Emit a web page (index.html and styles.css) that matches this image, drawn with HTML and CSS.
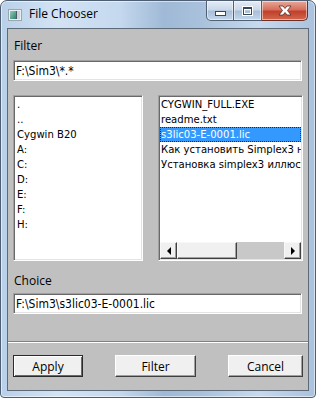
FILE: index.html
```html
<!DOCTYPE html>
<html lang="ru">
<head>
    <meta charset="UTF-8">
    <title>File Chooser</title>
    <link rel="stylesheet" href="styles.css">
</head>
<body>

<div class="window">
    <div class="titlebar">
        <svg class="app-icon" width="14" height="12" viewBox="0 0 14 12">
            <defs>
                <linearGradient id="teal" x1="0" y1="0" x2="1" y2="1">
                    <stop offset="0" stop-color="#8fd0b8"/>
                    <stop offset="1" stop-color="#2f7f72"/>
                </linearGradient>
            </defs>
            <rect x="0.5" y="0.5" width="13" height="11" fill="#e9eef2" stroke="#9aa6b0"/>
            <rect x="2" y="2" width="6" height="8" fill="url(#teal)"/>
            <rect x="8" y="2" width="1" height="8" fill="#4a5a66"/>
            <rect x="9" y="2" width="3" height="8" fill="#c9d6de"/>
        </svg>
        <span class="title">File Chooser</span>
        <div class="caption-buttons">
            <div class="cap-btn cap-min"><span class="min-glyph"></span></div>
            <div class="cap-btn cap-max"><span class="max-glyph"></span></div>
            <div class="cap-btn cap-close">
                <svg width="18" height="11" viewBox="0 0 18 11">
                    <path d="M3 1 L7 1 L9 3.5 L11 1 L15 1 L11.5 5.5 L15 10 L11 10 L9 7.5 L7 10 L3 10 L6.5 5.5 Z"
                          fill="#ffffff" stroke="#5b2a22" stroke-width="0.8" stroke-linejoin="round"/>
                </svg>
            </div>
        </div>
    </div>

    <div class="client">
        <div class="field-label">Filter</div>
        <input class="entry" type="text" value="F:\Sim3\*.*">

        <div class="lists">
            <div class="listbox dir-list">
                <div class="list-item">.</div>
                <div class="list-item">..</div>
                <div class="list-item">Cygwin B20</div>
                <div class="list-item">A:</div>
                <div class="list-item">C:</div>
                <div class="list-item">D:</div>
                <div class="list-item">E:</div>
                <div class="list-item">F:</div>
                <div class="list-item">H:</div>
            </div>
            <div class="listbox file-list">
                <div class="list-items">
                    <div class="list-item">CYGWIN_FULL.EXE</div>
                    <div class="list-item">readme.txt</div>
                    <div class="list-item selected">s3lic03-E-0001.lic</div>
                    <div class="list-item">Как установить Simplex3 на</div>
                    <div class="list-item">Установка simplex3 иллюстр</div>
                </div>
                <div class="hscroll">
                    <div class="scroll-btn"><span class="arrow-left"></span></div>
                    <div class="scroll-thumb"></div>
                    <div class="scroll-trough"></div>
                    <div class="scroll-btn"><span class="arrow-right"></span></div>
                </div>
            </div>
        </div>

        <div class="field-label choice-label">Choice</div>
        <input class="entry choice-entry" type="text" value="F:\Sim3\s3lic03-E-0001.lic">

        <div class="separator"></div>

        <div class="buttons">
            <button class="btn btn-default btn-apply">Apply</button>
            <button class="btn btn-filter">Filter</button>
            <button class="btn btn-cancel">Cancel</button>
        </div>
    </div>
</div>

</body>
</html>
```

FILE: styles.css
```css
body {
    margin: 0;
    padding: 0;
    background: #ffffff;
    font-family: "Open Sans", "Liberation Sans", sans-serif;
}
.window {
    width: 316px;
    height: 398px;
    box-sizing: border-box;
    border: 1px solid #4e5f73;
    border-radius: 7px 7px 4px 4px;
    padding: 0 6px 6px 6px;
    display: flex;
    flex-direction: column;
    background: linear-gradient(90deg, #b9d0e9 0%, #d3e3f4 18%, #c4d8ee 38%, #9fb9d6 52%, #a9c1dc 64%, #c6d9ee 82%, #aac2de 100%);
    box-shadow: inset 0 0 0 1px rgba(255, 255, 255, 0.55);
    overflow: hidden;
}
.titlebar {
    height: 27px;
    display: flex;
    align-items: flex-start;
    flex-shrink: 0;
}
.app-icon {
    margin: 8px 0 0 1px;
    flex-shrink: 0;
}
.title {
    margin: 5px 0 0 7px;
    font-size: 12px;
    line-height: 15px;
    color: #000000;
}
.caption-buttons {
    margin-left: auto;
    margin-right: 1px;
    display: flex;
    height: 20px;
}
.cap-btn {
    height: 20px;
    box-sizing: border-box;
    border: 1px solid #4f6074;
    border-top: none;
    display: flex;
    justify-content: center;
    align-items: center;
    box-shadow: inset 0 0 0 1px rgba(255, 255, 255, 0.5);
}
.cap-min {
    width: 28px;
    border-radius: 0 0 0 5px;
    background: linear-gradient(180deg, #e4ecf6 0%, #cad9ea 45%, #a9bfd9 55%, #c3d6ec 100%);
}
.cap-max {
    width: 28px;
    border-left: none;
    background: linear-gradient(180deg, #e4ecf6 0%, #cad9ea 45%, #a9bfd9 55%, #c3d6ec 100%);
}
.cap-close {
    width: 46px;
    border-left: none;
    border-radius: 0 0 5px 0;
    border-color: #6b2f25;
    background: linear-gradient(180deg, #e7a999 0%, #d6705c 45%, #c2412b 55%, #d0674c 100%);
}
.min-glyph {
    width: 9px;
    height: 3px;
    margin-top: 5px;
    background: #ffffff;
    border: 1px solid #36475a;
}
.max-glyph {
    width: 7px;
    height: 5px;
    background: transparent;
    border: 1px solid #36475a;
    border-top-width: 2px;
    box-shadow: 0 0 0 1px #ffffff, inset 0 0 0 1px #ffffff;
}

/* client area */
.client {
    flex: 1;
    border: 1px solid #5d6a78;
    background: #c0c0c0;
    padding: 0 5px;
    display: flex;
    flex-direction: column;
}
.field-label {
    margin-top: 9px;
    padding-left: 1px;
    font-size: 12px;
    line-height: 16px;
    color: #000000;
}
.choice-label {
    margin-top: 12px;
}
.entry {
    display: block;
    width: 289px;
    height: 21px;
    box-sizing: border-box;
    margin: 6px 0 0 0;
    padding: 0 0 0 2px;
    border: 1px solid;
    border-color: #a0a0a0 #ffffff #ffffff #a0a0a0;
    box-shadow: inset 1px 1px 0 #696969, inset -1px -1px 0 #e3e3e3;
    background: #ffffff;
    color: #000000;
    font-family: "DejaVu Sans Condensed", "Liberation Sans", sans-serif;
    font-size: 12px;
    outline: none;
}
.choice-entry {
    margin-top: 4px;
}
.lists {
    margin-top: 14px;
    display: flex;
    gap: 15px;
}
.listbox {
    height: 166px;
    box-sizing: border-box;
    border: 1px solid;
    border-color: #a0a0a0 #ffffff #ffffff #a0a0a0;
    box-shadow: inset 1px 1px 0 #696969, inset -1px -1px 0 #e3e3e3;
    background: #ffffff;
    padding: 1px;
    overflow: hidden;
    font-family: "DejaVu Sans Condensed", "Liberation Sans", sans-serif;
    font-size: 11.2px;
    color: #000000;
}
.dir-list {
    width: 130px;
}
.file-list {
    width: 145px;
    display: flex;
    flex-direction: column;
}
.list-items {
    flex: 1;
    overflow: hidden;
}
.list-item {
    height: 15px;
    line-height: 15px;
    padding-left: 2px;
    white-space: nowrap;
    overflow: hidden;
}
.file-list .list-item {
    padding-left: 1px;
}
.list-item.selected {
    background: #3399ff;
    color: #ffffff;
    outline: 1px dotted #20206a;
    outline-offset: -1px;
}

/* horizontal scrollbar */
.hscroll {
    height: 17px;
    display: flex;
    background: #c8c8c8;
}
.scroll-btn, .scroll-thumb {
    box-sizing: border-box;
    background: #f0f0f0;
    border: 1px solid;
    border-color: #f8f8f8 #404040 #404040 #f8f8f8;
    box-shadow: inset -1px -1px 0 #a0a0a0;
}
.scroll-btn {
    width: 17px;
    display: flex;
    justify-content: center;
    align-items: center;
}
.scroll-thumb {
    width: 60px;
}
.scroll-trough {
    flex: 1;
}
.arrow-left {
    width: 0;
    height: 0;
    border-top: 4px solid transparent;
    border-bottom: 4px solid transparent;
    border-right: 4px solid #000000;
}
.arrow-right {
    width: 0;
    height: 0;
    border-top: 4px solid transparent;
    border-bottom: 4px solid transparent;
    border-left: 4px solid #000000;
}

.separator {
    margin: 27px -5px 0 -5px;
    border-top: 1px solid #808080;
    border-bottom: 1px solid #ffffff;
}
.buttons {
    margin-top: 12px;
    display: flex;
    gap: 32px;
}
.btn {
    height: 22px;
    box-sizing: border-box;
    padding: 0;
    background: #f0f0f0;
    border: 1px solid;
    border-color: #ffffff #404040 #404040 #ffffff;
    box-shadow: inset -1px -1px 0 #a0a0a0;
    font-family: "Open Sans", "Liberation Sans", sans-serif;
    font-size: 12px;
    color: #000000;
}
.btn-default {
    border-color: #2a2a2a;
    box-shadow: inset 1px 1px 0 #ffffff, inset -1px -1px 0 #696969;
}
.btn-apply {
    width: 70px;
}
.btn-filter {
    width: 81px;
}
.btn-cancel {
    width: 75px;
}
```
